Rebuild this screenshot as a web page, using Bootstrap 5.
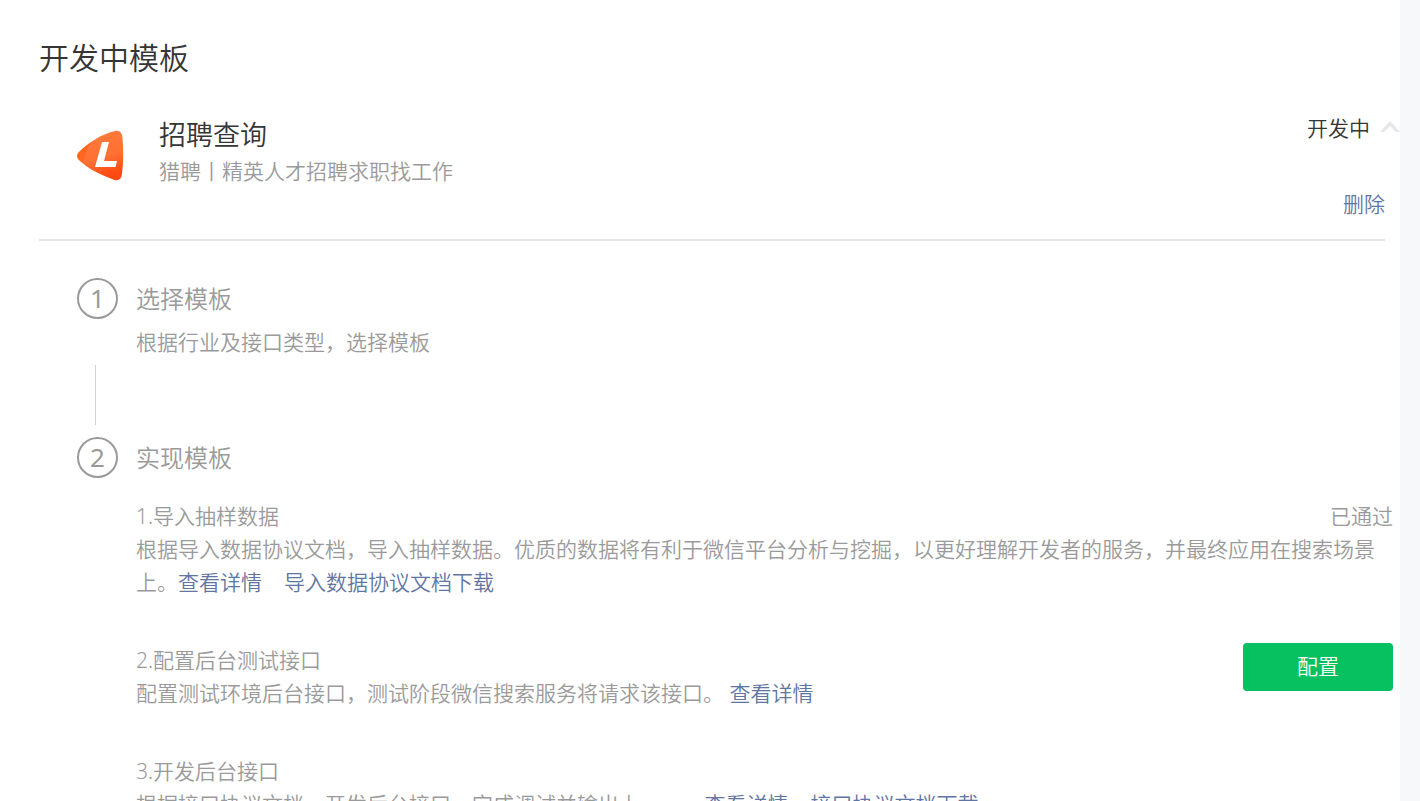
<!DOCTYPE html>
<html lang="zh-CN">
<head>
<meta charset="utf-8">
<meta name="viewport" content="width=device-width, initial-scale=1">
<title>开发中模板</title>
<link rel="stylesheet" href="https://cdn.jsdelivr.net/npm/bootstrap@5.3.0/dist/css/bootstrap.min.css">
<style>
  body { background: #f6f8fa; color: #353535; font-family: "Noto Sans", "Noto Sans CJK SC", sans-serif; font-weight: 350; font-size: 21px; line-height: 33px; }
  .page-panel { background: #fff; margin-right: 20px; padding: 37px 0 0 39px; height: 100vh; overflow: hidden; }
  .page-title { font-size: 30px; line-height: 42px; font-weight: 350; }
  .tpl-head { margin-right: 15px; padding: 36px 0 18px 38px; border-bottom: 2px solid #e4e8eb; }
  .tpl-logo { width: 48px; height: 52px; margin-top: 15px; }
  .tpl-name { font-size: 27px; line-height: 40px; font-weight: 350; }
  .tpl-info { margin-left: 34px; }
  .tpl-status { margin: -3px -15px 0 0; gap: 10px; }
  .muted-text { color: #9a9a9a; }
  a { color: #6175a2; text-decoration: none; }
  .steps { padding: 37px 0 0 38px; }
  .step-side { width: 41px; margin-right: 18px; }
  .step-num { width: 41px; height: 41px; border: 2px solid #9a9a9a; border-radius: 50%; font: 26px/37px "Noto Sans", sans-serif; }
  .step-line { width: 1px; height: 60px; margin: 46px 0 12px 18px; background: #d2d2d2; }
  .step-title { font-size: 24px; line-height: 42px; font-weight: 350; }
  .step-text { margin-top: 6px; }
  .task { margin-right: 7px; }
  .task-label { font: inherit; }
  .task-list { display: grid; gap: 45px; padding-top: 21px; }
  .link-gap { margin-left: 22px; }
  .link-gap-wide { margin-left: 38px; }
  .task-btn { width: 150px; height: 48px; margin-top: -1px; background: #07c160; color: #fff; font-size: 21px; font-weight: 350; border-radius: 4px; padding: 0; }
  .task-btn:hover { background: #06ad56; color: #fff; }
</style>
</head>
<body>
<main class="page-panel">
  <h1 class="page-title mb-0">开发中模板</h1>
  <header class="tpl-head">
    <div class="d-flex align-items-start">
      <svg class="tpl-logo" viewBox="0 0 48 52" aria-hidden="true">
        <defs><linearGradient id="lg" x1="0" y1="0" x2="0.3" y2="1"><stop offset="0" stop-color="#ff7e3c"/><stop offset="0.65" stop-color="#ff7033"/><stop offset="1" stop-color="#ff4a12"/></linearGradient></defs>
        <path d="M2 22C12 12 25 4 38 1c5-1 7 2 7.500 7 1 12 1 24-.5 36-.6 5-3 7-7.500 6C24 45 11 39 2 30c-2.500-3-2.500-5 0-8z" fill="url(#lg)"/>
        <path d="M2 22C6 18 10 15 14 12 9 20 7 26 6 33L2 30c-2.500-3-2.500-5 0-8z" fill="#ff5e10" opacity=".6"/>
        <path d="M25 12h7l-5 19h13l-1.500 6H18z" fill="#fff"/>
      </svg>
      <div class="tpl-info flex-grow-1">
        <h2 class="tpl-name mb-0">招聘查询</h2>
        <p class="muted-text mb-0">猎聘丨精英人才招聘求职找工作</p>
      </div>
      <div class="tpl-status d-flex align-items-center">
        <span>开发中</span>
        <svg width="20" height="18" viewBox="0 0 20 18" aria-hidden="true"><path d="M0 12L10 1 20 12H16L10 6 4 12z" fill="#e4e8eb"/></svg>
      </div>
    </div>
    <div class="text-end"><a href="#">删除</a></div>
  </header>
  <section class="steps">
    <div class="d-flex">
      <div class="step-side flex-shrink-0 muted-text">
        <div class="step-num text-center">1</div>
        <div class="step-line"></div>
      </div>
      <div class="muted-text">
        <h3 class="step-title mb-0">选择模板</h3>
        <p class="step-text mb-0">根据行业及接口类型，选择模板</p>
      </div>
    </div>
    <div class="d-flex">
      <div class="step-side flex-shrink-0 muted-text">
        <div class="step-num text-center">2</div>
      </div>
      <div class="flex-grow-1 muted-text">
        <h3 class="step-title mb-0">实现模板</h3>
        <div class="task-list">
          <article class="task">
            <div class="d-flex justify-content-between"><h4 class="task-label mb-0">1.导入抽样数据</h4><span>已通过</span></div>
            <p class="mb-0">根据导入数据协议文档，导入抽样数据。优质的数据将有利于微信平台分析与挖掘，以更好理解开发者的服务，并最终应用在搜索场景上。<a href="#">查看详情</a><a href="#" class="link-gap">导入数据协议文档下载</a></p>
          </article>
          <article class="task d-flex justify-content-between align-items-start">
            <div>
              <h4 class="task-label mb-0">2.配置后台测试接口</h4>
              <p class="mb-0">配置测试环境后台接口，测试阶段微信搜索服务将请求该接口。 <a href="#">查看详情</a></p>
            </div>
            <button type="button" class="btn task-btn">配置</button>
          </article>
          <article class="task">
            <h4 class="task-label mb-0">3.开发后台接口</h4>
            <p class="mb-0">根据接口协议文档，开发后台接口，完成调试并输出上。 <a href="#" class="link-gap-wide">查看详情</a><a href="#" class="link-gap">接口协议文档下载</a></p>
          </article>
        </div>
      </div>
    </div>
  </section>
</main>
<script src="https://cdn.jsdelivr.net/npm/bootstrap@5.3.0/dist/js/bootstrap.bundle.min.js"></script>
</body>
</html>
